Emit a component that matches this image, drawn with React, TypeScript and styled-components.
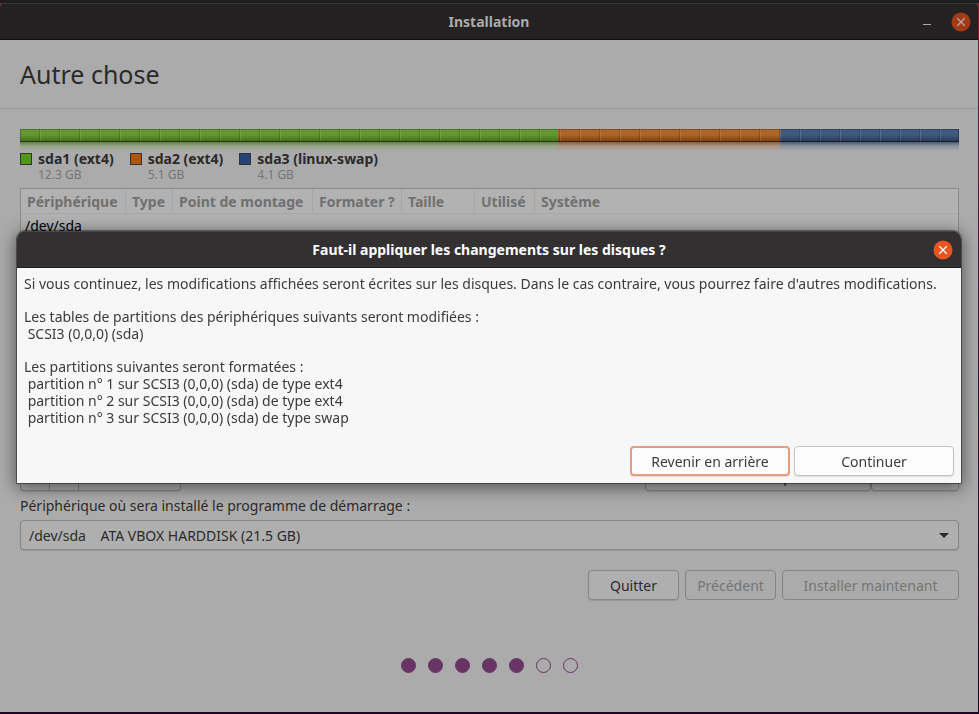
import React from 'react';
import styled, { createGlobalStyle } from 'styled-components';

const GlobalStyle = createGlobalStyle`
  * { box-sizing: border-box; }
  body {
    margin: 0;
    background: #1b0523;
    color: #2a2a2a;
    font: 14px/17px "Noto Sans", "Open Sans", sans-serif;
  }
  button, select { font: inherit; color: inherit; }
`;

const Desktop = styled.div`
  min-height: 100vh;
  display: flex;
  flex-direction: column;
  padding: 3px 1px 2px 0;
  background: linear-gradient(#1d1d1d 3px, #8c1c2c 3px, #62143a 110px, #3c0b45 420px, #1b0523);
`;

const Window = styled.div`
  flex: 1;
  display: flex;
  flex-direction: column;
  overflow: hidden;
  border-radius: 4px 4px 0 0;
  background: #ababab;
`;

const TitleBar = styled.header<{ $active?: boolean }>`
  height: 37px;
  display: grid;
  grid-template-columns: 1fr auto 1fr;
  align-items: center;
  padding: 0 ${p => (p.$active ? 8 : 7)}px;
  border-top: 1px solid ${p => (p.$active ? '#4b4848' : '#383636')};
  border-bottom: 1px solid ${p => (p.$active ? '#1d1b1b' : '#121112')};
  background: ${p => (p.$active ? '#333031' : '#232122')};
  color: ${p => (p.$active ? '#ffffff' : '#ababab')};
`;

const Title = styled.h2`
  grid-column: 2;
  margin: 0;
  font-size: 14px;
  line-height: 17px;
  font-weight: 700;
`;

const WindowButtons = styled.div`
  display: flex;
  justify-content: flex-end;
  align-items: center;
  gap: 16px;
`;

const IconButton = styled.button`
  display: flex;
  padding: 0;
  border: 0;
  background: none;
`;

const Heading = styled.h1`
  margin: 0;
  padding: 17px 20px 16px;
  border-bottom: 1px solid #999999;
  font-size: 25px;
  line-height: 35px;
  font-weight: 400;
`;

const Content = styled.main`
  flex: 1;
  display: flex;
  flex-direction: column;
  padding: 20px 19px 39px 20px;
`;

const DiskBar = styled.div`
  display: flex;
  height: 22px;
  position: relative;
  &::after {
    content: "";
    position: absolute;
    inset: 0 0 9px;
    background:
      linear-gradient(rgba(0, 0, 0, 0.22), rgba(0, 0, 0, 0.22)) top / 100% 1px no-repeat,
      linear-gradient(rgba(0, 0, 0, 0.45), rgba(0, 0, 0, 0.45)) bottom / 100% 1px no-repeat,
      linear-gradient(90deg, rgba(0, 0, 0, 0.3) 1px, transparent 1px, transparent calc(100% - 1px), rgba(0, 0, 0, 0.3) calc(100% - 1px)),
      repeating-linear-gradient(90deg, rgba(255, 255, 255, 0.12) 0 1px, transparent 1px 19px, rgba(0, 0, 0, 0.16) 19px 20px);
  }
`;

const Segment = styled.div<{ $share: number; $light: string; $dark: string }>`
  flex: ${p => p.$share} 0 0;
  background:
    linear-gradient(${p => p.$light} 6px, ${p => p.$dark} 13px) top / 100% 13px no-repeat,
    linear-gradient(${p => p.$dark}b0, ${p => p.$light}50 4px, ${p => p.$light}00) bottom / 100% 9px no-repeat;
`;

const Legend = styled.ul`
  display: flex;
  gap: 16px;
  margin: 0;
  padding: 0;
  list-style: none;
`;

const LegendItem = styled.li`
  display: grid;
  grid-template-columns: 12px auto;
  column-gap: 6px;
  align-items: center;
`;

const Swatch = styled.span<{ $color: string }>`
  width: 12px;
  height: 12px;
  border: 1px solid #333333;
  background: ${p => p.$color};
`;

const PartitionName = styled.strong`
  line-height: 16px;
`;

const PartitionSize = styled.span`
  grid-column: 2;
  font-size: 12px;
  line-height: 15px;
  color: #757575;
`;

const TableFrame = styled.div`
  flex: 1;
  margin-top: 6px;
  border: 1px solid #8a8a8a;
  background: #b2b2b2;
`;

const Table = styled.table`
  width: 100%;
  table-layout: fixed;
  border-collapse: separate;
  border-spacing: 0;
  th {
    height: 25px;
    padding: 0 6px;
    border-bottom: 1px solid #a7a7a7;
    color: #707070;
    text-align: left;
    white-space: nowrap;
  }
  th:not(:last-child) { border-right: 1px solid #a7a7a7; }
  td {
    height: 22px;
    padding: 0 4px;
    color: #000000;
  }
`;

const Col = styled.col<{ $width?: number }>`
  width: ${p => (p.$width ? `${p.$width}px` : 'auto')};
`;

const Toolbar = styled.div`
  display: flex;
  margin-top: 4px;
`;

const ToolGroup = styled.div`
  display: flex;
  &:last-child { margin-left: auto; }
`;

const Button = styled.button<{ $width: number; $look?: 'dialog' | 'focus' }>`
  width: ${p => p.$width}px;
  height: 30px;
  padding: 0;
  white-space: nowrap;
  border: ${p => (p.$look === 'focus' ? '2px solid #e99b80' : `1px solid ${p.$look ? '#c4c4c4' : '#858585'}`)};
  border-radius: 4px;
  background: ${p => (p.$look ? '#fcfcfc' : '#afafaf')};
  color: ${p => (p.$look ? '#3b3b3b' : '#2a2a2a')};
  box-shadow: 0 1px 1px rgba(0, 0, 0, 0.1);
  &:disabled { color: #757575; background: #ababab; box-shadow: none; }
`;

const LinkedButton = styled(Button)`
  &:not(:first-child) { border-left: 0; border-top-left-radius: 0; border-bottom-left-radius: 0; }
  &:not(:last-child) { border-top-right-radius: 0; border-bottom-right-radius: 0; }
`;

const BootLabel = styled.label`
  margin-top: 6px;
  line-height: 17px;
`;

const SelectWrap = styled.div`
  position: relative;
  margin-top: 6px;
  svg { position: absolute; right: 10px; top: 13px; pointer-events: none; }
`;

const Select = styled.select`
  display: block;
  width: 100%;
  height: 30px;
  padding: 0 30px 0 8px;
  appearance: none;
  border: 1px solid #858585;
  border-radius: 4px;
  background: #afafaf;
  box-shadow: 0 1px 1px rgba(0, 0, 0, 0.1);
`;

const Actions = styled.div`
  display: flex;
  justify-content: flex-end;
  gap: 6px;
  margin-top: 20px;
`;

const Progress = styled.div`
  display: flex;
  justify-content: center;
  gap: 12px;
  margin-top: 58px;
`;

const Dot = styled.span<{ $done: boolean }>`
  width: 15px;
  height: 15px;
  border: 1px solid #673465;
  border-radius: 50%;
  background: ${p => (p.$done ? '#673465' : 'transparent')};
`;

const Overlay = styled.div`
  position: fixed;
  inset: 0;
  display: flex;
  align-items: center;
  padding: 0 18px 0 17px;
`;

const Dialog = styled.section`
  flex: 1;
  border-radius: 8px 8px 0 0;
  overflow: hidden;
  background: #f7f7f7;
  color: #3b3b3b;
  box-shadow: 0 0 0 1px rgba(0, 0, 0, 0.4), 0 3px 16px 2px rgba(0, 0, 0, 0.5);
`;

const DialogBody = styled.div`
  padding: 7px;
`;

const Message = styled.p`
  margin: 0 0 16px;
  line-height: 17px;
  white-space: pre-wrap;
`;

const DialogActions = styled.div`
  display: flex;
  justify-content: flex-end;
  gap: 4px;
  margin-top: 20px;
`;

const CloseIcon = ({ dim }: { dim?: boolean }) => (
  <svg width="20" height="20" viewBox="0 0 20 20">
    <circle cx="10" cy="10" r="9.5" fill={dim ? '#a33a17' : '#e95420'} />
    <path d="M6.3 6.3l7.4 7.4M13.7 6.3l-7.4 7.4" stroke={dim ? '#b5aaa6' : '#ffffff'} strokeWidth="1.3" />
  </svg>
);

const partitions = [
  { name: 'sda1 (ext4)', size: '12.3 GB', share: 538, swatch: '#4e9a0f', light: '#63972f', dark: '#3e6a18' },
  { name: 'sda2 (ext4)', size: '5.1 GB', share: 222, swatch: '#b05600', light: '#ad6426', dark: '#733c10' },
  { name: 'sda3 (linux-swap)', size: '4.1 GB', share: 179, swatch: '#234676', light: '#41597f', dark: '#23354f' },
];

const columns = [
  { label: 'Périphérique', width: 105 },
  { label: 'Type', width: 47 },
  { label: 'Point de montage', width: 140 },
  { label: 'Formater ?', width: 89 },
  { label: 'Taille', width: 73 },
  { label: 'Utilisé', width: 60 },
  { label: 'Système' },
];

export default function App() {
  return (
    <>
      <GlobalStyle />
      <Desktop>
        <Window>
          <TitleBar>
            <Title>Installation</Title>
            <WindowButtons>
              <IconButton aria-label="Réduire">
                <svg width="20" height="20" viewBox="0 0 20 20"><path d="M8 12.5h8" stroke="#ababab" /></svg>
              </IconButton>
              <IconButton aria-label="Fermer"><CloseIcon dim /></IconButton>
            </WindowButtons>
          </TitleBar>
          <Heading>Autre chose</Heading>
          <Content>
            <DiskBar>
              {partitions.map(p => <Segment key={p.name} $share={p.share} $light={p.light} $dark={p.dark} />)}
            </DiskBar>
            <Legend>
              {partitions.map(p => (
                <LegendItem key={p.name}>
                  <Swatch $color={p.swatch} />
                  <PartitionName>{p.name}</PartitionName>
                  <PartitionSize>{p.size}</PartitionSize>
                </LegendItem>
              ))}
            </Legend>
            <TableFrame>
              <Table>
                <colgroup>{columns.map(c => <Col key={c.label} $width={c.width} />)}</colgroup>
                <thead><tr>{columns.map(c => <th key={c.label}>{c.label}</th>)}</tr></thead>
                <tbody><tr><td colSpan={7}>/dev/sda</td></tr></tbody>
              </Table>
            </TableFrame>
            <Toolbar>
              <ToolGroup>
                <LinkedButton $width={30}>+</LinkedButton>
                <LinkedButton $width={29}>−</LinkedButton>
                <LinkedButton $width={102}>Modifier…</LinkedButton>
              </ToolGroup>
              <ToolGroup>
                <Button $width={226}>Nouvelle table de partition…</Button>
                <Button $width={88}>Revenir</Button>
              </ToolGroup>
            </Toolbar>
            <BootLabel htmlFor="boot">Périphérique où sera installé le programme de démarrage :</BootLabel>
            <SelectWrap>
              <Select id="boot" defaultValue="sda">
                <option value="sda">{'/dev/sda\u00a0\u00a0\u00a0\u00a0ATA VBOX HARDDISK (21.5 GB)'}</option>
              </Select>
              <svg width="10" height="5" viewBox="0 0 10 5"><path d="M0 0h10L5 5z" fill="#2a2a2a" /></svg>
            </SelectWrap>
            <Actions>
              <Button $width={91}>Quitter</Button>
              <Button $width={91} disabled>Précédent</Button>
              <Button $width={177} disabled>Installer maintenant</Button>
            </Actions>
            <Progress>
              {[0, 1, 2, 3, 4, 5, 6].map(n => <Dot key={n} $done={n < 5} />)}
            </Progress>
          </Content>
        </Window>
      </Desktop>
      <Overlay>
        <Dialog role="dialog" aria-labelledby="dialog-title">
          <TitleBar $active>
            <Title id="dialog-title">Faut-il appliquer les changements sur les disques ?</Title>
            <WindowButtons>
              <IconButton aria-label="Fermer"><CloseIcon /></IconButton>
            </WindowButtons>
          </TitleBar>
          <DialogBody>
            <Message>Si vous continuez, les modifications affichées seront écrites sur les disques. Dans le cas contraire, vous pourrez faire d'autres modifications.</Message>
            <Message>{'Les tables de partitions des périphériques suivants seront modifiées :\n SCSI3 (0,0,0) (sda)'}</Message>
            <Message>{'Les partitions suivantes seront formatées :\n partition n° 1 sur SCSI3 (0,0,0) (sda) de type ext4\n partition n° 2 sur SCSI3 (0,0,0) (sda) de type ext4\n partition n° 3 sur SCSI3 (0,0,0) (sda) de type swap'}</Message>
            <DialogActions>
              <Button $width={160} $look="focus">Revenir en arrière</Button>
              <Button $width={160} $look="dialog">Continuer</Button>
            </DialogActions>
          </DialogBody>
        </Dialog>
      </Overlay>
    </>
  );
}
